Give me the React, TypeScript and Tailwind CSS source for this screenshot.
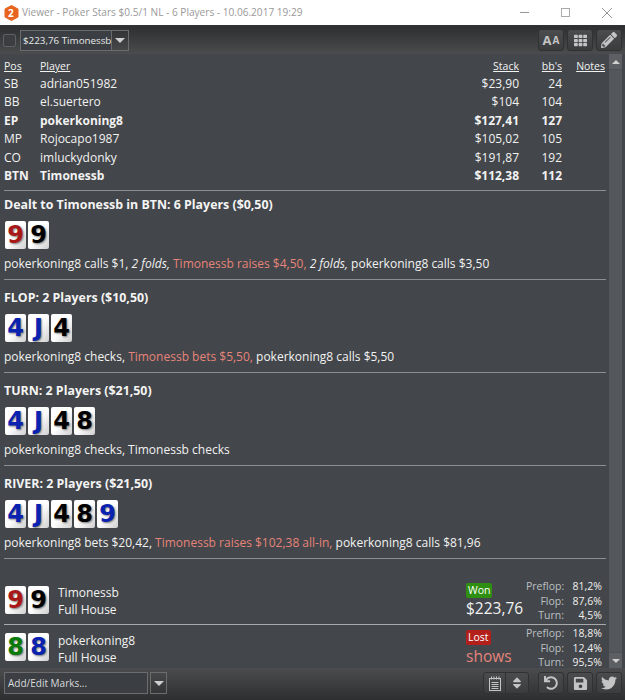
import React from "react";
import { FaTwitter, FaSave, FaPencilAlt, FaTh, FaSort, FaUndo } from "react-icons/fa";

function Card({ v, c }: { v: string; c: string }) {
  return (
    <div className="w-[21px] h-[28px] flex items-center justify-center rounded-[2px] bg-gradient-to-br from-white via-white to-[#cfcfcf]">
      <span className={`font-['DejaVu_Sans',sans-serif] font-bold text-[24px] leading-none [text-shadow:1px_1px_2px_rgba(0,0,0,0.5)] ${c}`}>{v}</span>
    </div>
  );
}

const R = "text-[#a81818]";
const K = "text-black";
const B = "text-[#0a22b0]";
const G = "text-[#0a7a0a]";

function Cards({ cards }: { cards: [string, string][] }) {
  return (
    <div className="flex gap-[2px] ml-[1px]">
      {cards.map(([v, c], i) => (
        <Card key={i} v={v} c={c} />
      ))}
    </div>
  );
}

const rows = [
  ["SB", "adrian051982", "$23,90", "24", false],
  ["BB", "el.suertero", "$104", "104", false],
  ["EP", "pokerkoning8", "$127,41", "127", true],
  ["MP", "Rojocapo1987", "$105,02", "105", false],
  ["CO", "imluckydonky", "$191,87", "192", false],
  ["BTN", "Timonessb", "$112,38", "112", true],
] as const;

function Section({ title, cards, children, first }: { title: string; cards: [string, string][]; children: React.ReactNode; first?: boolean }) {
  return (
    <div className={`border-b border-[#8c8f92] mr-[3px] ${first ? "pt-[5px] h-[89px]" : "pt-[9px] h-[93px]"}`}>
      <div className="font-bold text-[12.4px] h-[18px] leading-[18px] text-[#f4f4f4] whitespace-nowrap">{title}</div>
      <div className="mt-[7px]"><Cards cards={cards} /></div>
      <div className="mt-[6px] h-[18px] leading-[18px] whitespace-nowrap">{children}</div>
    </div>
  );
}

function ToolBtn({ children, className = "" }: { children: React.ReactNode; className?: string }) {
  return (
    <div className={`h-[22px] flex items-center justify-center rounded-[3px] border border-[#2f3133] bg-gradient-to-b from-[#4a4c4e] to-[#3a3c3e] text-[#c4c4c4] ${className}`}>
      {children}
    </div>
  );
}

function Stats({ a, b, c }: { a: string; b: string; c: string }) {
  return (
    <div className="w-[76px] text-[10.5px] leading-[14.5px] text-right">
      {[["Preflop:", a], ["Flop:", b], ["Turn:", c]].map(([k, v]) => (
        <div key={k} className="flex justify-end">
          <span className="text-[#bcc0c4]">{k}</span>
          <span className="w-[38px] text-[#f0f0f0]">{v}</span>
        </div>
      ))}
    </div>
  );
}

function Notepad() {
  return (
    <svg width="12" height="15" viewBox="0 0 12 15" fill="none" stroke="#c4c4c4">
      <rect x="0.5" y="2.5" width="11" height="12" />
      <path d="M2.5 0.5V3.5M5 0.5V3.5M7.5 0.5V3.5M10 0.5V3.5" />
      <path d="M2.5 6.5H9.5M2.5 8.5H9.5M2.5 10.5H9.5M2.5 12.5H9.5" />
    </svg>
  );
}

function Arrow() {
  return <div className="w-0 h-0 border-x-[5px] border-x-transparent border-t-[5px] border-t-[#cfcfcf]" />;
}

export default function App() {
  return (
    <div className="w-[625px] h-[700px] flex flex-col overflow-hidden bg-[#43464a] text-[#f2f2f2] text-[12px] font-['Open_Sans',sans-serif]">
      {/* title bar */}
      <div className="h-[26px] shrink-0 bg-white flex items-center border-b border-[#333]">
        <svg className="ml-[4px]" width="15" height="16" viewBox="0 0 15 16">
          <path d="M7.5 0.5L14 4V12L7.5 15.5L1 12V4Z" fill="#e8641e" stroke="#e8641e" strokeLinejoin="round" />
        </svg>
        <div className="ml-[-11px] w-[7px] text-[10px] font-bold text-white leading-none">2</div>
        <div className="ml-[7px] text-[10.1px] text-[#999] whitespace-nowrap">Viewer - Poker Stars $0.5/1 NL - 6 Players - 10.06.2017 19:29</div>
        <div className="ml-auto flex items-center gap-[32px] mr-[13px]">
          <div className="w-[9px] h-px bg-[#999]" />
          <div className="w-[9px] h-[9px] border border-[#aaa]" />
          <svg width="10" height="10" viewBox="0 0 10 10" stroke="#999" strokeWidth="1"><path d="M0 0L10 10M10 0L0 10" /></svg>
        </div>
      </div>
      {/* toolbar */}
      <div className="h-[28px] shrink-0 flex items-center bg-gradient-to-b from-[#2e2f31] to-[#4a4c4e] pl-[3px] pr-[3px]">
        <div className="w-[13px] h-[13px] rounded-[2px] border border-[#5e6063] bg-[#3b3d40]" />
        <div className="ml-[4px] h-[21px] flex">
          <div className="w-[92px] border border-[#6a6c6e] bg-[#3b3e42] text-[9.8px] leading-[19px] pl-[2px] text-[#e8eaec] whitespace-nowrap overflow-hidden">$223,76 Timonessb</div>
          <div className="w-[17px] border border-l-0 border-[#6a6c6e] flex items-center justify-center"><Arrow /></div>
        </div>
        <div className="ml-auto flex gap-[3px]">
          <ToolBtn className="w-[26px]"><span className="font-bold text-[13px] leading-none">A</span><span className="font-bold text-[10px] leading-none ml-[1px]">A</span></ToolBtn>
          <ToolBtn className="w-[26px]"><FaTh size={13} /></ToolBtn>
          <ToolBtn className="w-[26px]"><FaPencilAlt size={16} /></ToolBtn>
        </div>
      </div>
      {/* main */}
      <div className="flex-1 min-h-0 flex overflow-hidden">
        <div className="flex-1 min-w-0 overflow-hidden pl-[4px] pt-[5px]">
          <div className="grid grid-cols-[36px_1fr_60px_43px_43px] pr-[4px] leading-[18.4px] whitespace-nowrap">
            <div className="underline text-[10.5px] h-[16px] leading-[14px]">Pos</div>
            <div className="underline text-[10.5px] h-[16px] leading-[14px]">Player</div>
            <div className="underline text-[10.5px] h-[16px] leading-[14px] text-right">Stack</div>
            <div className="underline text-[10.5px] h-[16px] leading-[14px] text-right">bb's</div>
            <div className="underline text-[10.5px] h-[16px] leading-[14px] text-right">Notes</div>
            {rows.map(([p, n, s, b, bold]) => (
              <React.Fragment key={p}>
                <div className={bold ? "font-bold" : ""}>{p}</div>
                <div className={bold ? "font-bold" : ""}>{n}</div>
                <div className={`text-right ${bold ? "font-bold" : ""}`}>{s}</div>
                <div className={`text-right ${bold ? "font-bold" : ""}`}>{b}</div>
                <div />
              </React.Fragment>
            ))}
          </div>
          <div className="mt-[5px] border-b border-[#8c8f92] mr-[3px]" />
          <Section first title="Dealt to Timonessb in BTN: 6 Players ($0,50)" cards={[["9", R], ["9", K]]}>
            pokerkoning8 calls $1, <i>2 folds,</i> <span className="text-[#e5847a]">Timonessb raises $4,50,</span> <i>2 folds,</i> pokerkoning8 calls $3,50
          </Section>
          <Section title="FLOP: 2 Players ($10,50)" cards={[["4", B], ["J", B], ["4", K]]}>
            pokerkoning8 checks, <span className="text-[#e5847a]">Timonessb bets $5,50,</span> pokerkoning8 calls $5,50
          </Section>
          <Section title="TURN: 2 Players ($21,50)" cards={[["4", B], ["J", B], ["4", K], ["8", K]]}>
            pokerkoning8 checks, Timonessb checks
          </Section>
          <Section title="RIVER: 2 Players ($21,50)" cards={[["4", B], ["J", B], ["4", K], ["8", K], ["9", B]]}>
            pokerkoning8 bets $20,42, <span className="text-[#e5847a]">Timonessb raises $102,38 all-in,</span> pokerkoning8 calls $81,96
          </Section>
          <div className="flex items-start h-[66px] mr-[3px] border-b border-[#a8aaac]">
            <div className="mt-[27px]"><Cards cards={[["9", R], ["9", K]]} /></div>
            <div className="ml-[9px] leading-[17px] mt-[25px]"><div>Timonessb</div><div>Full House</div></div>
            <div className="ml-auto w-[60px] mt-[24px]">
              <div className="inline-block align-top bg-[#2f8f10] rounded-[2px] text-[10.5px] px-[2px] leading-[15px] text-white">Won</div>
              <div className="text-[15.5px] leading-[18px] -mt-[2px]">$223,76</div>
            </div>
            <div className="mt-[20px] mr-[4px]"><Stats a="81,2%" b="87,6%" c="4,5%" /></div>
          </div>
          <div className="flex items-start mr-[3px]">
            <div className="mt-[8px]"><Cards cards={[["8", G], ["8", B]]} /></div>
            <div className="ml-[9px] leading-[17px] mt-[7px]"><div>pokerkoning8</div><div>Full House</div></div>
            <div className="ml-auto w-[60px] mt-[5px]">
              <div className="inline-block align-top bg-[#b3201c] rounded-[2px] text-[10.5px] px-[2px] leading-[15px] text-white">Lost</div>
              <div className="text-[15.5px] leading-[18px] -mt-[1px] text-[#e5847a]">shows</div>
            </div>
            <div className="mt-[1px] mr-[4px]"><Stats a="18,8%" b="12,4%" c="95,5%" /></div>
          </div>
        </div>
        {/* scrollbar */}
        <div className="w-[13px] shrink-0 mr-[3px] flex flex-col bg-[#4e5155]">
          <div className="h-[15px] bg-[#5c5f63] flex items-center justify-center">
            <div className="w-0 h-0 border-x-[4px] border-x-transparent border-b-[4px] border-b-[#d0d0d0]" />
          </div>
          <div className="flex-1 my-[1px] bg-[#54575b]" />
          <div className="h-[15px] bg-[#5c5f63] flex items-center justify-center">
            <div className="w-0 h-0 border-x-[4px] border-x-transparent border-t-[4px] border-t-[#d0d0d0]" />
          </div>
        </div>
      </div>
      {/* bottom */}
      <div className="h-[32px] shrink-0 flex items-start pt-[4px] bg-gradient-to-b from-[#4a4c4e] to-[#2e2f31] pl-[4px] pr-[3px]">
        <div className="h-[22px] flex">
          <div className="w-[144px] border border-[#6a6c6e] bg-[#3b3e42] text-[10px] leading-[20px] pl-[3px] text-[#d8dadc] whitespace-nowrap">Add/Edit Marks...</div>
          <div className="ml-[2px] w-[17px] border border-[#6a6c6e] flex items-center justify-center"><Arrow /></div>
        </div>
        <div className="ml-auto flex gap-[3px]">
          <ToolBtn className="w-[46px] mr-[6px]">
            <Notepad />
            <span className="w-px h-[20px] bg-[#2f3133] mx-[4px]" />
            <FaSort size={14} />
          </ToolBtn>
          <ToolBtn className="w-[26px]"><FaUndo size={14} /></ToolBtn>
          <ToolBtn className="w-[26px]"><FaSave size={15} /></ToolBtn>
          <ToolBtn className="w-[26px]"><FaTwitter size={16} /></ToolBtn>
        </div>
      </div>
    </div>
  );
}
